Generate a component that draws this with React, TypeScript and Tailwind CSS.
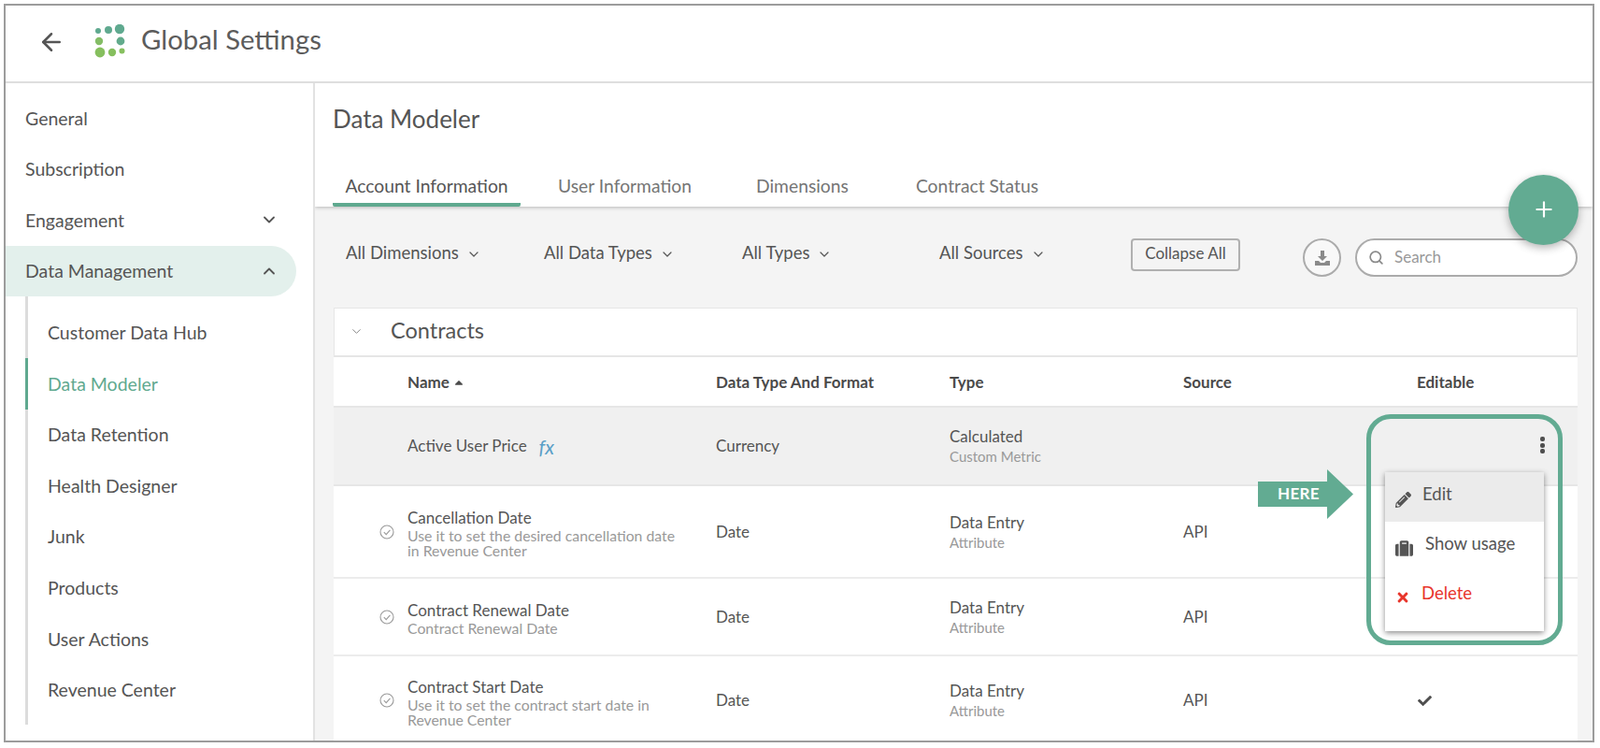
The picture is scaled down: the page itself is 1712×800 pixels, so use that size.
import { ArrowLeft, ChevronDown, ChevronUp, Plus, Search } from "lucide-react";
import { FaPencilAlt, FaSuitcase, FaTimes, FaCheck, FaCaretUp } from "react-icons/fa";

const topNav = [
  { label: "General" },
  { label: "Subscription" },
  { label: "Engagement", chevron: "down" },
  { label: "Data Management", chevron: "up", open: true },
];

const subNav = [
  "Customer Data Hub",
  "Data Modeler",
  "Data Retention",
  "Health Designer",
  "Junk",
  "Products",
  "User Actions",
  "Revenue Center",
];

const rows = [
  {
    name: "Cancellation Date",
    desc: ["Use it to set the desired cancellation date", "in Revenue Center"],
    format: "Date",
    height: "h-[99px]",
  },
  {
    name: "Contract Renewal Date",
    desc: ["Contract Renewal Date"],
    format: "Date",
    height: "h-[83px]",
  },
  {
    name: "Contract Start Date",
    desc: ["Use it to set the contract start date in", "Revenue Center"],
    format: "Date",
    height: "h-[96px]",
    check: true,
  },
];

function Logo() {
  return (
    <svg width="36" height="40" viewBox="100 26 36 40" className="absolute left-[100px] top-[26px]">
      <circle cx="105" cy="33" r="3" fill="#5fa98f" />
      <circle cx="116" cy="32" r="4" fill="#5fa98f" />
      <circle cx="128" cy="31" r="5.2" fill="#5fa98f" />
      <circle cx="106" cy="44" r="4.2" fill="#84bd66" />
      <circle cx="129" cy="44" r="4.4" fill="#62ab8c" />
      <circle cx="107" cy="56" r="5.4" fill="#86bf5e" />
      <circle cx="120" cy="56" r="4.2" fill="#86bf5e" />
      <circle cx="130.5" cy="54.5" r="3" fill="#86bf5e" />
    </svg>
  );
}

function RowCheck() {
  return (
    <svg width="16" height="16" viewBox="0 0 16 16" fill="none" stroke="#9a9a9a" strokeWidth="1.1" className="shrink-0">
      <circle cx="8" cy="8" r="7" />
      <path d="M4.8 8.2 7.2 10.6 11.4 5.8" />
    </svg>
  );
}

function Filter({ label, width }: { label: string; width: string }) {
  return (
    <div className={`${width} flex items-center gap-[8px] text-[#555] text-[18.5px]`}>
      {label}
      <ChevronDown size={16} strokeWidth={1.8} className="mt-[2px]" />
    </div>
  );
}

export default function App() {
  return (
    <div className="relative w-[1712px] h-[800px] bg-white overflow-hidden text-[#555] font-[Lato,sans-serif]">
      <div className="absolute left-[4px] top-[4px] w-[1702px] h-[790px] border-2 border-[#9c9c9c] flex flex-col">
        <div className="h-[83px] shrink-0 border-b-2 border-[#dedede]" />

        <div className="flex flex-1 min-h-0">
          {/* sidebar */}
          <aside className="relative w-[331px] shrink-0 border-r-2 border-[#e2e2e2] pt-[10px] bg-white">
            {topNav.map((item) => (
              <div
                key={item.label}
                className={`h-[54.6px] flex items-center justify-between pl-[21px] pr-[18px] text-[19.500px] w-[311px] ${
                  item.open ? "bg-[#e3f0ec] rounded-r-full" : ""
                }`}
              >
                {item.label}
                {item.chevron === "down" && <ChevronDown size={20} strokeWidth={2.2} className="mr-[1px]" />}
                {item.chevron === "up" && <ChevronUp size={20} strokeWidth={2.2} className="mr-[1px]" />}
              </div>
            ))}
            <div className="ml-[21px] mr-[10px] border-l-[3px] border-[#dcdcdc] pt-[11px] h-[458px] relative">
              {subNav.map((label) => (
                <div
                  key={label}
                  className={`h-[54.6px] flex items-center pl-[21px] text-[19.500px] ${
                    label === "Data Modeler" ? "text-[#5fa98f] relative" : ""
                  }`}
                >
                  {label === "Data Modeler" && (
                    <span className="absolute left-[-3px] top-0 w-[3px] h-full bg-[#5fa98f]" />
                  )}
                  {label}
                </div>
              ))}
            </div>
          </aside>

          {/* main */}
          <main className="flex-1 bg-[#f4f4f4] min-w-0 overflow-hidden">
            <div className="h-[132px] bg-white shadow-[0_1px_4px_rgba(0,0,0,0.25)] relative">
              <h2 className="absolute left-[19px] top-[20px] text-[26px] leading-[36px]">Data Modeler</h2>
              <div className="absolute left-[19px] bottom-0 flex items-end text-[19.300px] h-[43px] whitespace-nowrap">
                <div className="w-[201px] h-full flex justify-center items-start pt-[7px] border-b-[4px] border-[#5fa98f] rounded-b-[2px]">
                  Account Information
                </div>
                <div className="ml-[40px] h-full pt-[7px] w-[143px] text-[#757575] text-center">User Information</div>
                <div className="ml-[69px] h-full pt-[7px] text-[#757575]">Dimensions</div>
                <div className="ml-[72px] h-full pt-[7px] text-[#757575]">Contract Status</div>
              </div>
            </div>

            <div className="h-[108px] flex items-start pl-[33px] pt-[36px]">
              <Filter label="All Dimensions" width="w-[212px]" />
              <Filter label="All Data Types" width="w-[212px]" />
              <Filter label="All Types" width="w-[211px]" />
              <Filter label="All Sources" width="w-[205px]" />
              <button className="mt-[-2px] w-[117px] h-[35px] border-2 border-[#b0b0b0] rounded-[4px] text-[17px] leading-[26px] pb-[3px] text-[#555]">
                Collapse All
              </button>
              <div className="ml-[67px] mt-[-2px] w-[41px] h-[41px] border-2 border-[#ababab] rounded-full flex items-center justify-center bg-white/40">
                <svg width="18" height="18" viewBox="0 0 18 18" fill="#8a8a8a">
                  <path d="M7 1h4v6h3L9 12 4 7h3z" />
                  <path d="M1 12h4l2 2h4l2-2h4v5H1z" />
                </svg>
              </div>
              <div className="ml-[15px] mt-[-2px] w-[238px] h-[41px] border-2 border-[#ababab] rounded-full bg-white flex items-center pl-[12px] pb-[1px] text-[#999] text-[17px]">
                <Search size={17} strokeWidth={2.4} className="text-[#8a8a8a] mr-[11px]" />
                Search
              </div>
            </div>

            <div className="ml-[20px] w-[1331px]">
              <div className="h-[53px] bg-white border border-[#e6e6e6] border-b-2 flex items-center pb-[2px]">
                <ChevronDown size={15} strokeWidth={1.6} className="ml-[16px] text-[#8a8a8a]" />
                <span className="ml-[29px] text-[23.500px]">Contracts</span>
              </div>

              <div className="h-[52px] bg-white grid grid-cols-[409px_250px_250px_250px_1fr] items-center pt-[1px] text-[17px] font-bold text-[#4a4a4a]">
                <div className="pl-[79px] flex items-center gap-[3px]">
                  Name <FaCaretUp size={14} />
                </div>
                <div>Data Type And Format</div>
                <div>Type</div>
                <div>Source</div>
                <div>Editable</div>
              </div>

              <div className="h-[86px] bg-[#f0f0f0] border-t-2 border-b-2 border-[#e6e6e6] grid grid-cols-[409px_250px_250px_250px_1fr] items-center text-[17px]">
                <div className="pl-[79px] flex items-center">
                  Active User Price
                  <span className="ml-[13px] text-[21px] leading-none italic text-[#5b9fc7] font-['Liberation_Serif',serif]">
                    fx
                  </span>
                </div>
                <div>Currency</div>
                <div className="pt-[1px]">
                  <div className="leading-[22px]">Calculated</div>
                  <div className="text-[15px] leading-[21px] text-[#999]">Custom Metric</div>
                </div>
              </div>

              {rows.map((row) => (
                <div
                  key={row.name}
                  className={`${row.height} bg-white border-b-2 border-[#ececec] grid grid-cols-[409px_250px_250px_250px_1fr] items-center text-[17px]`}
                >
                  <div className="pl-[49px] flex items-center gap-[14px]">
                    <RowCheck />
                    <div className="pt-[2px]">
                      <div className="leading-[23px]">{row.name}</div>
                      {row.desc.map((line) => (
                        <div key={line} className="text-[15.800px] text-[#999] leading-[16px]">
                          {line}
                        </div>
                      ))}
                    </div>
                  </div>
                  <div>{row.format}</div>
                  <div className="pt-[1px]">
                    <div className="leading-[22px]">Data Entry</div>
                    <div className="text-[15px] leading-[21px] text-[#999]">Attribute</div>
                  </div>
                  <div>API</div>
                  {row.check && (
                    <div className="pl-[1px]">
                      <FaCheck size={15} className="text-[#4f4f4f]" />
                    </div>
                  )}
                </div>
              ))}
            </div>
          </main>
        </div>
      </div>

      {/* header content */}
      <ArrowLeft size={30} strokeWidth={2} className="absolute left-[40px] top-[30px] text-[#555]" />
      <Logo />
      <div className="absolute left-[151px] top-[23px] text-[29.300px] leading-[38px] text-[#5c5c5c]">Global Settings</div>

      {/* floating add button */}
      <div className="absolute left-[1614px] top-[187px] w-[75px] h-[75px] rounded-full bg-[#62ab92] shadow-[0_3px_10px_rgba(0,0,0,0.3)] flex items-center justify-center">
        <Plus size={26} strokeWidth={2} className="text-white mb-[2px]" />
      </div>

      {/* callout */}
      <div className="absolute left-[1462px] top-[443px] w-[210px] h-[247px] border-[5px] border-[#62ab92] rounded-[26px]" />
      <svg width="102" height="54" viewBox="0 0 102 54" className="absolute left-[1346px] top-[502px]">
        <path d="M0 13h74V0l28 26.500L74 53V40H0z" fill="#62ab92" />
      </svg>
      <div className="absolute left-[1367px] top-[519px] text-white text-[17px] leading-[18px] font-bold tracking-[0.3px] font-['Inter',sans-serif]">
        HERE
      </div>

      {/* kebab */}
      <div className="absolute left-[1648px] top-[467px] flex flex-col gap-[1.500px]">
        <span className="w-[5px] h-[5px] rounded-[2px] bg-[#4f4f4f]" />
        <span className="w-[5px] h-[5px] rounded-[2px] bg-[#4f4f4f]" />
        <span className="w-[5px] h-[5px] rounded-[2px] bg-[#4f4f4f]" />
      </div>

      {/* row menu */}
      <div className="absolute left-[1482px] top-[505px] w-[170px] h-[170px] bg-white shadow-[0_2px_6px_rgba(0,0,0,0.45)] text-[18.500px]">
        <div className="h-[53px] bg-[#ebebeb] flex items-center pl-[11px]">
          <FaPencilAlt size={17} className="text-[#555] mt-[5px]" />
          <span className="ml-[12px] mb-[5px]">Edit</span>
        </div>
        <div className="h-[53px] flex items-center pl-[11px]">
          <FaSuitcase size={19} className="text-[#555] mt-[4px]" />
          <span className="ml-[13px] mb-[5px]">Show usage</span>
        </div>
        <div className="h-[53px] flex items-center pl-[11px] text-[#e8352b]">
          <FaTimes size={16} className="mt-[2px]" />
          <span className="ml-[12px] mb-[5px]">Delete</span>
        </div>
      </div>
    </div>
  );
}
